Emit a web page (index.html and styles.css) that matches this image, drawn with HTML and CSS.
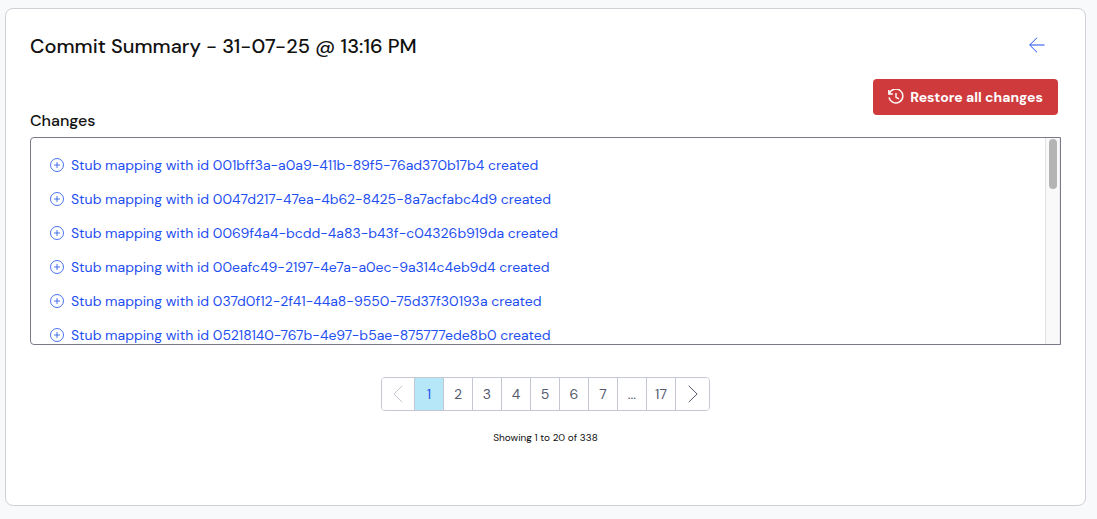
FILE: index.html
```html
<!DOCTYPE html>
<html lang="en">
<head>
    <meta charset="UTF-8">
    <meta name="viewport" content="width=device-width, initial-scale=1.0">
    <title>Commit Summary</title>
    <link rel="stylesheet" href="styles.css">
</head>
<body>
    <svg class="sprite" aria-hidden="true">
        <symbol id="icon-plus" viewBox="0 0 14 14">
            <circle cx="7" cy="7" r="6.5"/>
            <path d="M7 4v6M4 7h6"/>
        </symbol>
    </svg>
    <main class="card">
        <header class="card-header">
            <h1>Commit Summary - 31-07-25 @ 13:16 PM</h1>
            <a class="back" href="#" aria-label="Back">
                <svg width="16" height="16" viewBox="0 0 16 16"><path d="M15.5 8H.8M8 .7L.7 8L8 15.3"/></svg>
            </a>
        </header>
        <div class="actions">
            <button class="restore" type="button">
                <svg width="16" height="16" viewBox="0 0 16 16"><path d="M.8 1v4h4M1.2 4.8A7 7 0 1 1 1 8.4M8 4v4.3l3 1.6"/></svg>
                Restore all changes
            </button>
        </div>
        <h2>Changes</h2>
        <div class="changes">
            <ul class="change-list">
                <li><a href="#"><svg width="14" height="14"><use href="#icon-plus"/></svg>Stub mapping with id 001bff3a-a0a9-411b-89f5-76ad370b17b4 created</a></li>
                <li><a href="#"><svg width="14" height="14"><use href="#icon-plus"/></svg>Stub mapping with id 0047d217-47ea-4b62-8425-8a7acfabc4d9 created</a></li>
                <li><a href="#"><svg width="14" height="14"><use href="#icon-plus"/></svg>Stub mapping with id 0069f4a4-bcdd-4a83-b43f-c04326b919da created</a></li>
                <li><a href="#"><svg width="14" height="14"><use href="#icon-plus"/></svg>Stub mapping with id 00eafc49-2197-4e7a-a0ec-9a314c4eb9d4 created</a></li>
                <li><a href="#"><svg width="14" height="14"><use href="#icon-plus"/></svg>Stub mapping with id 037d0f12-2f41-44a8-9550-75d37f30193a created</a></li>
                <li><a href="#"><svg width="14" height="14"><use href="#icon-plus"/></svg>Stub mapping with id 05218140-767b-4e97-b5ae-875777ede8b0 created</a></li>
            </ul>
            <div class="scroll-track"><div class="scroll-thumb"></div></div>
        </div>
        <nav class="pagination" aria-label="Pagination">
            <button class="arrow" type="button" aria-label="Previous page" disabled>
                <svg width="10" height="18" viewBox="0 0 10 18"><path d="M9.3 .8L.9 9l8.4 8.2"/></svg>
            </button>
            <button class="active" type="button" aria-current="page">1</button>
            <button type="button">2</button>
            <button type="button">3</button>
            <button type="button">4</button>
            <button type="button">5</button>
            <button type="button">6</button>
            <button type="button">7</button>
            <span class="gap">...</span>
            <button type="button">17</button>
            <button class="arrow" type="button" aria-label="Next page">
                <svg width="10" height="18" viewBox="0 0 10 18"><path d="M.7 .8L9.1 9L.7 17.2"/></svg>
            </button>
        </nav>
        <p class="showing">Showing 1 to 20 of 338</p>
    </main>
</body>
</html>
```
FILE: styles.css
```css
* {
    box-sizing: border-box;
}

body {
    margin: 0;
    padding: 8px 11px 13px 5px;
    min-height: 100vh;
    display: flex;
    background-color: #f8f9fb;
    font-family: "DM Sans", Inter, sans-serif;
    color: #111;
}

svg {
    display: block;
    flex: none;
    fill: none;
    stroke: currentColor;
}

.sprite {
    position: absolute;
    width: 0;
    height: 0;
}

.card {
    flex: 1;
    min-width: 0;
    padding: 24px;
    background: white;
    border: 1px solid #d0d0d6;
    border-radius: 8px;
}

.card-header {
    display: flex;
    justify-content: space-between;
    align-items: flex-start;
    height: 26px;
}

h1 {
    margin: 0;
    font-size: 20px;
    line-height: 26px;
    font-weight: 500;
}

.back {
    margin: 4px 16px 0 0;
    color: #1f4ff0;
}

.actions {
    display: flex;
    justify-content: flex-end;
    padding: 20px 3px 0 0;
}

.restore {
    display: flex;
    align-items: center;
    gap: 6px;
    height: 36px;
    padding: 0 15px;
    background-color: #cf3b3d;
    color: white;
    border: none;
    border-radius: 4px;
    font-family: inherit;
    font-size: 14px;
    font-weight: 700;
    cursor: pointer;
}

.restore svg {
    stroke-width: 1.4;
}

h2 {
    margin: -4px 0 6px;
    font-size: 16px;
    line-height: 20px;
    font-weight: 500;
}

.changes {
    display: flex;
    height: 208px;
    border: 1px solid #7c7889;
    border-radius: 4px 0 0 4px;
    overflow: hidden;
}

.change-list {
    flex: 1;
    margin: 0;
    padding: 10px 19px;
    list-style: none;
}

.change-list a {
    display: flex;
    align-items: center;
    gap: 7px;
    height: 34px;
    color: #1f4ff0;
    font-size: 14px;
    text-decoration: none;
    white-space: nowrap;
}

.change-list svg {
    stroke-width: 0.8;
}

.scroll-track {
    width: 15px;
    padding: 1px 2px 0 3px;
    background: #f9f9f9;
    border-left: 1px solid #e2e2e2;
    border-right: 1px solid #ececec;
}

.scroll-thumb {
    height: 50px;
    background: #b4b4b4;
    border-radius: 4px;
}

.pagination {
    display: flex;
    width: fit-content;
    margin: 32px auto 0;
    border: 1px solid #c5c7d3;
    border-radius: 4px;
    overflow: hidden;
}

.pagination button,
.gap {
    display: flex;
    align-items: center;
    justify-content: center;
    width: 29px;
    height: 32px;
    padding: 0;
    background: white;
    border: none;
    border-right: 1px solid #c5c7d3;
    color: #555a70;
    font-family: inherit;
    font-size: 14px;
}

.pagination .arrow {
    width: 33px;
}

.pagination .arrow:last-child {
    border-right: none;
}

.pagination .arrow:disabled {
    color: #c5c7d3;
}

.pagination .active {
    background: #b5e7f8;
    color: #1f4ff0;
}

.showing {
    margin: 20px 0 0;
    font-size: 10px;
    line-height: 14px;
    text-align: center;
}
```
